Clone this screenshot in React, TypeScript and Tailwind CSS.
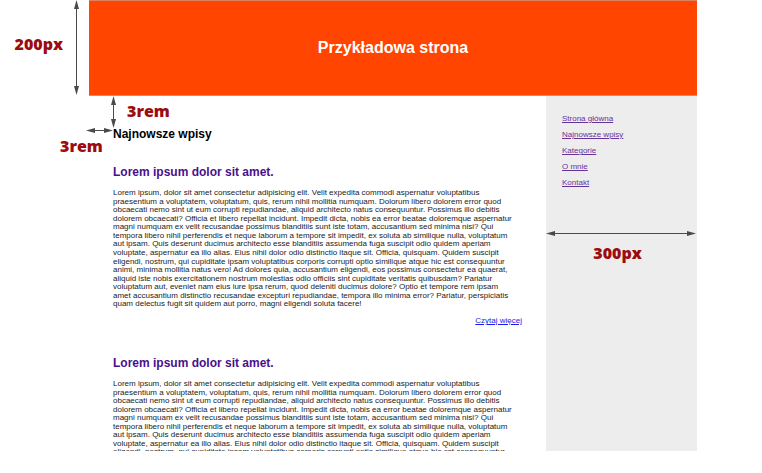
const paragraph = [
  'Lorem ipsum, dolor sit amet consectetur adipisicing elit. Velit expedita commodi aspernatur voluptatibus',
  'praesentium a voluptatem, voluptatum, quis, rerum nihil mollitia numquam. Dolorum libero dolorem error quod',
  'obcaecati nemo sint ut eum corrupti repudiandae, aliquid architecto natus consequuntur. Possimus illo debitis',
  'dolorem obcaecati? Officia et libero repellat incidunt. Impedit dicta, nobis ea error beatae doloremque aspernatur',
  'magni numquam ex velit recusandae possimus blanditiis sunt iste totam, accusantium sed minima nisi? Qui',
  'tempora libero nihil perferendis et neque laborum a tempore sit impedit, ex soluta ab similique nulla, voluptatum',
  'aut ipsam. Quis deserunt ducimus architecto esse blanditiis assumenda fuga suscipit odio quidem aperiam',
  'voluptate, aspernatur ea illo alias. Eius nihil dolor odio distinctio itaque sit. Officia, quisquam. Quidem suscipit',
  'eligendi, nostrum, qui cupiditate ipsam voluptatibus corporis corrupti optio similique atque hic est consequuntur',
  'animi, minima mollitia natus vero! Ad dolores quia, accusantium eligendi, eos possimus consectetur ea quaerat,',
  'aliquid iste nobis exercitationem nostrum molestias odio officiis sint cupiditate veritatis quibusdam? Pariatur',
  'voluptatum aut, eveniet nam eius iure ipsa rerum, quod deleniti ducimus dolore? Optio et tempore rem ipsam',
  'amet accusantium distinctio recusandae excepturi repudiandae, tempora illo minima error? Pariatur, perspiciatis',
  'quam delectus fugit sit quidem aut porro, magni eligendi soluta facere!',
];

const links = ['Strona główna', 'Najnowsze wpisy', 'Kategorie', 'O mnie', 'Kontakt'];

function Post({ preview = false }: { preview?: boolean }) {
  const lines = preview ? paragraph.slice(0, 9) : paragraph;
  return (
    <article>
      <h3 className="text-[12px] leading-4 font-bold text-[#4b0f8c]">Lorem ipsum dolor sit amet.</h3>
      <p
        className={`mt-2 grid text-[8px] leading-[9px] whitespace-nowrap text-[#222] ${
          preview ? 'h-[77px] grid-rows-9' : 'h-[120px] grid-rows-14'
        }`}
      >
        {lines.map((line) => (
          <span key={line}>{line} </span>
        ))}
      </p>
      {!preview && (
        <p className="mt-2 text-right text-[8px] leading-[9px]">
          <a href="#post" className="text-[#1a1aee] underline">Czytaj więcej</a>
        </p>
      )}
    </article>
  );
}

function VerticalArrow({ length }: { length: number }) {
  return (
    <svg className="shrink-0" width="7" height={length} aria-hidden="true" fill="#4a4a4a">
      <path d={`M3.5 0L6 9H4V${length - 9}H6L3.5 ${length}L1 ${length - 9}H3V9H1Z`} />
    </svg>
  );
}

function HorizontalArrow({ length }: { length: number }) {
  return (
    <svg width={length} height="7" aria-hidden="true" fill="#4a4a4a">
      <path d={`M0 3.5L9 1V3H${length - 9}V1L${length} 3.5L${length - 9} 6V4H9V6Z`} />
    </svg>
  );
}

const labelStyle =
  "font-['Open_Sans','Noto_Sans',sans-serif] text-[16px] leading-5 font-extrabold whitespace-nowrap text-[#9c0b0e]";

export default function App() {
  return (
    <div className="flex h-screen flex-col overflow-hidden bg-white pr-[65px] pb-[22px] font-['Liberation_Sans',Arial,sans-serif]">
      <div className="flex h-24 shrink-0">
        <div className="flex w-[89px] shrink-0 justify-end gap-[10px] pr-[9px]">
          <span className={`${labelStyle} pt-[34px]`}>200px</span>
          <VerticalArrow length={95} />
        </div>
        <header className="flex flex-1 items-center justify-center border-t border-b border-t-[#dc805e] border-b-[#ff7f50] bg-[#ff4500]">
          <h1 className="text-[16px] leading-5 font-bold text-white">Przykładowa strona</h1>
        </header>
      </div>

      <div className="relative ml-[89px] flex min-h-0 flex-1">
        <main className="min-w-0 flex-1 overflow-hidden px-6 pt-[30px]">
          <h2 className="text-[12px] leading-4 font-bold text-black">Najnowsze wpisy</h2>
          <div className="mt-[22px] flex flex-col gap-[30px]">
            <Post />
            <Post preview />
          </div>
        </main>
        <aside className="w-[151px] shrink-0 bg-[#ededed] pt-[17px]">
          <nav aria-label="Menu">
            <ul className="flex flex-col gap-1 px-4 text-[8px] leading-3">
              {links.map((link) => (
                <li key={link}>
                  <a href="#menu" className="text-[#663399] underline">{link}</a>
                </li>
              ))}
            </ul>
          </nav>
          <div className="mt-[41px] flex flex-col gap-[6px]">
            <HorizontalArrow length={150} />
            <p className={`${labelStyle} pr-2 text-center`}>300px</p>
          </div>
        </aside>

        <div className="absolute top-0 left-[21px] flex gap-[10px]">
          <VerticalArrow length={32} />
          <span className={`${labelStyle} pt-[5px]`}>3rem</span>
        </div>
        <div className="absolute top-[31px] -left-[29px] flex flex-col gap-[2px]">
          <div className="flex justify-end pl-[26px]">
            <HorizontalArrow length={27} />
          </div>
          <span className={labelStyle}>3rem</span>
        </div>
      </div>
    </div>
  );
}
